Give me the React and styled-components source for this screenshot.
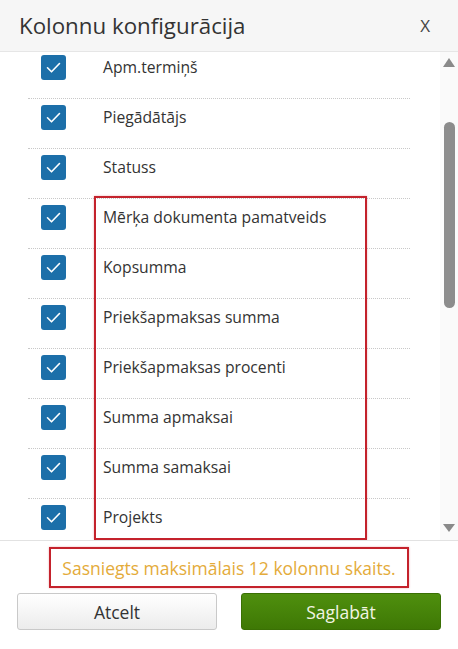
import React from 'react';
import styled, { createGlobalStyle } from 'styled-components';

const GlobalStyle = createGlobalStyle`
  html, body {
    margin: 0;
    padding: 0;
    background: #fff;
  }
  body {
    font-family: "Open Sans", "Noto Sans", sans-serif;
    color: #333;
  }
`;

const Dialog = styled.div`
  width: 458px;
  height: 649px;
  display: flex;
  flex-direction: column;
  background: #fff;
  overflow: hidden;
`;

const Header = styled.div`
  height: 51px;
  flex: 0 0 auto;
  display: flex;
  align-items: center;
  justify-content: space-between;
  padding: 0 28px 0 19px;
  background: #f6f6f6;
  border-bottom: 1px solid #e6e6e6;
`;

const Title = styled.h2`
  margin: 0;
  font-size: 22.3px;
  font-weight: 400;
  color: #333;
  line-height: 1;
  padding-top: 2px;
`;

const Close = styled.span`
  font-size: 17px;
  color: #444;
  line-height: 1;
`;

const Body = styled.div`
  position: relative;
  height: 488px;
  flex: 0 0 auto;
  display: flex;
  overflow: hidden;
`;

const ListPane = styled.div`
  flex: 1;
  overflow: hidden;
`;

const List = styled.ul`
  list-style: none;
  margin: -3px 0 0 28px;
  padding: 0;
  width: 382px;
`;

const Row = styled.li`
  height: 49px;
  display: flex;
  align-items: flex-start;
  padding-left: 13px;
  border-bottom: 1px dotted #c8c8c8;
`;

const RowInner = styled.div`
  margin-top: 6px;
  display: flex;
  align-items: center;
  gap: 37px;
  height: 25px;
`;

const Check = styled.span`
  width: 25px;
  height: 25px;
  border-radius: 3px;
  background: #1c6fa9;
  display: flex;
  align-items: center;
  justify-content: center;
  flex: 0 0 auto;
`;

const Label = styled.span`
  font-size: 15.7px;
  color: #333;
  line-height: 25px;
`;

const Scrollbar = styled.div`
  width: 18px;
  flex: 0 0 auto;
  background: #fafafa;
  display: flex;
  flex-direction: column;
  align-items: center;
  padding: 6px 0 6px;
  box-sizing: border-box;
`;

const Arrow = styled.span`
  width: 0;
  height: 0;
  border-left: 6px solid transparent;
  border-right: 6px solid transparent;
  ${({ $down }) =>
    $down
      ? 'border-top: 8px solid #8a8a8a; margin-top: auto; margin-bottom: 2px;'
      : 'border-bottom: 9px solid #8a8a8a;'}
`;

const Thumb = styled.span`
  margin-top: 55px;
  width: 11px;
  height: 186px;
  border-radius: 6px;
  background: #8c8c8c;
`;

const Highlight = styled.div`
  position: absolute;
  left: 94px;
  top: 144px;
  width: 273px;
  bottom: 0;
  border: 2px solid #c4222c;
  box-sizing: border-box;
  box-shadow: 0 0 2px rgba(196, 34, 44, 0.35);
  pointer-events: none;
`;

const Footer = styled.div`
  flex: 1;
  border-top: 1px solid #e2e2e2;
  display: flex;
  flex-direction: column;
  align-items: center;
  padding-top: 6px;
`;

const Warning = styled.div`
  width: 360px;
  height: 41px;
  box-sizing: border-box;
  border: 2px solid #c4222c;
  box-shadow: 0 0 2px rgba(196, 34, 44, 0.35);
  display: flex;
  align-items: center;
  justify-content: center;
  font-size: 17.5px;
  color: #e4ab3a;
`;

const Buttons = styled.div`
  margin-top: 5px;
  width: 100%;
  box-sizing: border-box;
  padding: 0 17px;
  display: flex;
  justify-content: space-between;
`;

const Button = styled.button`
  width: 200px;
  height: 37px;
  border-radius: 3px;
  font-family: "Open Sans", "Noto Sans", sans-serif;
  font-size: 17.5px;
  cursor: pointer;
  ${({ $primary }) =>
    $primary
      ? `
    background: linear-gradient(#4f8f0e, #3e7805);
    border: 1px solid #3a7004;
    color: #f2f5e4;
  `
      : `
    background: linear-gradient(#ffffff, #ececec);
    border: 1px solid #c9c9c9;
    color: #333;
  `}
`;

const items = [
  'Apm.termiņš',
  'Piegādātājs',
  'Statuss',
  'Mērķa dokumenta pamatveids',
  'Kopsumma',
  'Priekšapmaksas summa',
  'Priekšapmaksas procenti',
  'Summa apmaksai',
  'Summa samaksai',
  'Projekts',
];

const Tick = () => (
  <svg width="19" height="19" viewBox="0 0 19 19" fill="none">
    <path d="M3.5 9.8l4 4L15.5 5.5" stroke="#fff" strokeWidth="1.6" strokeLinecap="round" strokeLinejoin="round" />
  </svg>
);

export default function App() {
  return (
    <>
      <GlobalStyle />
      <Dialog>
        <Header>
          <Title>Kolonnu konfigurācija</Title>
          <Close>X</Close>
        </Header>
        <Body>
          <ListPane>
            <List>
              {items.map((item) => (
                <Row key={item}>
                  <RowInner>
                    <Check>
                      <Tick />
                    </Check>
                    <Label>{item}</Label>
                  </RowInner>
                </Row>
              ))}
            </List>
          </ListPane>
          <Scrollbar>
            <Arrow />
            <Thumb />
            <Arrow $down />
          </Scrollbar>
          <Highlight />
        </Body>
        <Footer>
          <Warning>Sasniegts maksimālais 12 kolonnu skaits.</Warning>
          <Buttons>
            <Button>Atcelt</Button>
            <Button $primary>Saglabāt</Button>
          </Buttons>
        </Footer>
      </Dialog>
    </>
  );
}
